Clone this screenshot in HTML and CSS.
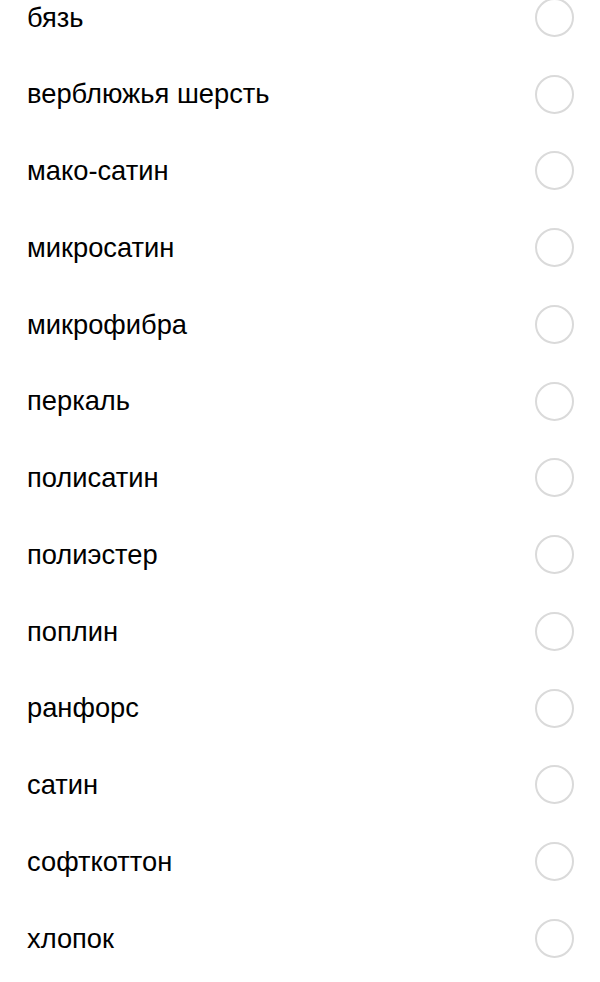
FILE: index.html
```html
<!DOCTYPE html>
<html lang="ru">
<head>
<meta charset="utf-8">
<link rel="stylesheet" href="styles.css">
</head>
<body>
<ul class="options">
  <li class="option"><span class="label">бязь</span><span class="radio"></span></li>
  <li class="option"><span class="label">верблюжья шерсть</span><span class="radio"></span></li>
  <li class="option"><span class="label">мако-сатин</span><span class="radio"></span></li>
  <li class="option"><span class="label">микросатин</span><span class="radio"></span></li>
  <li class="option"><span class="label">микрофибра</span><span class="radio"></span></li>
  <li class="option"><span class="label">перкаль</span><span class="radio"></span></li>
  <li class="option"><span class="label">полисатин</span><span class="radio"></span></li>
  <li class="option"><span class="label">полиэстер</span><span class="radio"></span></li>
  <li class="option"><span class="label">поплин</span><span class="radio"></span></li>
  <li class="option"><span class="label">ранфорс</span><span class="radio"></span></li>
  <li class="option"><span class="label">сатин</span><span class="radio"></span></li>
  <li class="option"><span class="label">софткоттон</span><span class="radio"></span></li>
  <li class="option"><span class="label">хлопок</span><span class="radio"></span></li>
</ul>
</body>
</html>
```
FILE: styles.css
```css
html, body {
  margin: 0;
  padding: 0;
  background: #fff;
}

body {
  font-family: "Liberation Sans", Arial, sans-serif;
  color: #000;
  overflow: hidden;
}

.options {
  list-style: none;
  margin: -21px 0 0;
  padding: 0 26px 0 27px;
}

.option {
  height: 76.75px;
  display: flex;
  align-items: center;
  justify-content: space-between;
}

.label {
  font-size: 27.3px;
  line-height: 1;
}

.radio {
  width: 35px;
  height: 35px;
  border: 2px solid #dadada;
  border-radius: 50%;
  flex: none;
}
```
